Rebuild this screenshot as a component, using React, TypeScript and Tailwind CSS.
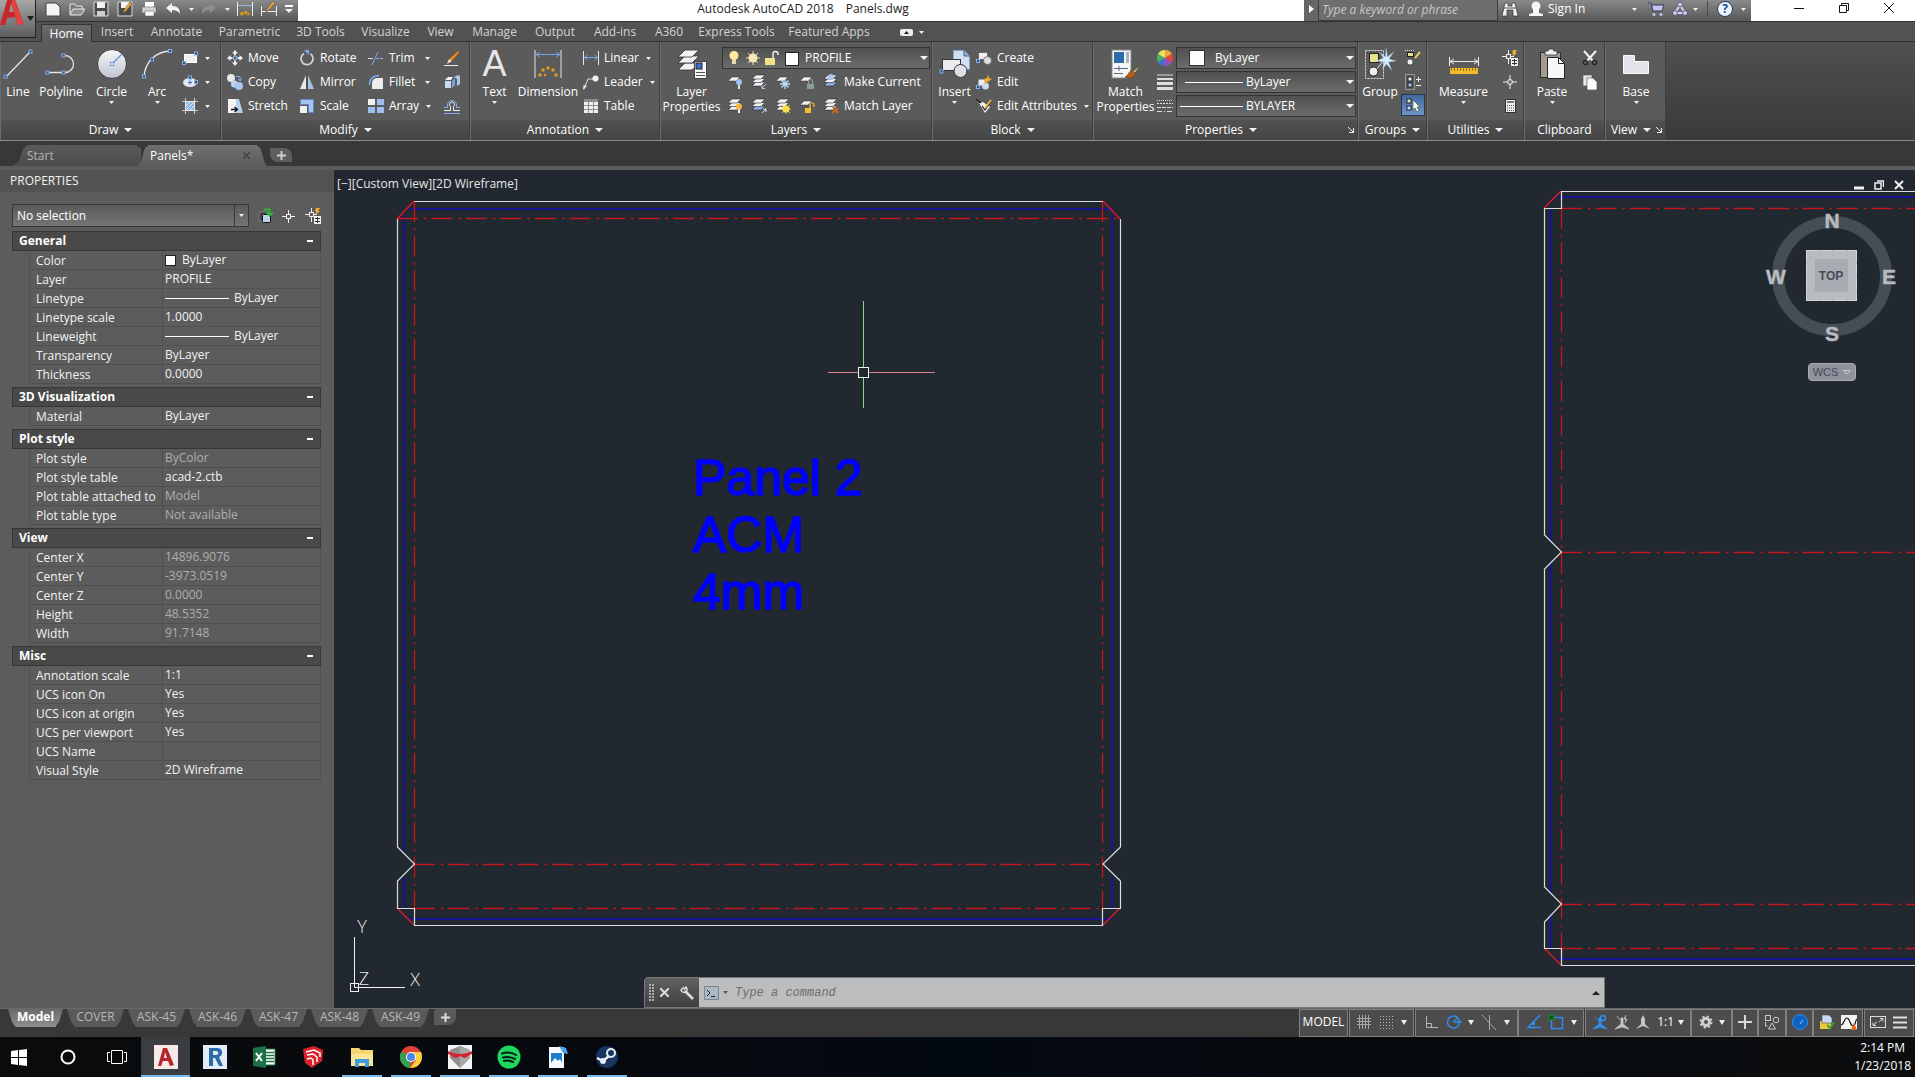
import type { ReactNode } from "react";

type Kids = { children?: ReactNode };

// small caret used by every drop-down
const Tri = ({ big = false, up = false, dark = false }: { big?: boolean; up?: boolean; dark?: boolean }) => (
  <svg width={big ? 8 : 5} height={big ? 4 : 3} viewBox="0 0 8 4" preserveAspectRatio="none" className="shrink-0" aria-hidden="true">
    <path d={up ? "M0 4h8L4 0z" : "M0 0h8L4 4z"} fill={dark ? "#222" : "#f2f2f2"} />
  </svg>
);

const Ic = ({ children, s = 16 }: Kids & { s?: number }) => (
  <svg width={s} height={s} viewBox={`0 0 ${s} ${s}`} fill="none" className="shrink-0" aria-hidden="true">
    {children}
  </svg>
);

const Grip = ({ x, y }: { x: number; y: number }) => (
  <rect x={x - 1.5} y={y - 1.5} width="3" height="3" fill="#3d4a5c" stroke="#7fb0f0" />
);

// ---------- large ribbon icons (32px) ----------
const big = {
  line: (
    <Ic s={32}>
      <path d="M4 29 28 4" stroke="#e4e4e4" strokeWidth="1.3" />
      <Grip x={3.5} y={28.5} />
      <Grip x={28.5} y={3.5} />
    </Ic>
  ),
  poly: (
    <Ic s={32}>
      <path d="M3 24.500h17a8.500 8.500 0 0 0 0-17h-1" stroke="#e4e4e4" strokeWidth="1.3" />
      <Grip x={2.5} y={24.5} />
      <Grip x={18.5} y={24.5} />
      <Grip x={18.5} y={7.5} />
    </Ic>
  ),
  circle: (
    <Ic s={32}>
      <defs>
        <linearGradient id="circ" x1="0" y1="0" x2="0" y2="1">
          <stop offset="0" stopColor="#f6f6f8" />
          <stop offset="1" stopColor="#bfc4cd" />
        </linearGradient>
      </defs>
      <circle cx="16" cy="16" r="14.500" fill="url(#circ)" stroke="#3c3c3c" />
      <path d="M16 16 26 6" stroke="#5f95dd" strokeWidth="1.300" />
      <rect x="14.500" y="14.500" width="3" height="3" fill="#fff" stroke="#5f95dd" />
    </Ic>
  ),
  arc: (
    <Ic s={32}>
      <path d="M3 29C4 14 14 4 29 3" stroke="#e4e4e4" strokeWidth="1.400" />
      <Grip x={3} y={28.5} />
      <Grip x={11} y={11.5} />
      <Grip x={29} y={3} />
    </Ic>
  ),
  text: <span className="h-8 font-['Liberation_Sans'] text-[36px] leading-8 text-[#e6e6e6]">A</span>,
  dim: (
    <Ic s={32}>
      <path d="M3 2v28M29 2v28" stroke="#e4e4e4" />
      <path d="M4 6.500h24M8 4 4 6.500 8 9M24 4l4 2.500L24 9" stroke="#6fa4ea" />
      <g fill="#e39a1c">
        <circle cx="16" cy="20" r="1.800" />
        <circle cx="11" cy="22" r="1.800" />
        <circle cx="21" cy="22" r="1.800" />
        <circle cx="8" cy="27" r="1.800" />
        <circle cx="13" cy="27" r="1.300" />
        <circle cx="24" cy="27" r="1.800" />
      </g>
    </Ic>
  ),
  layers: (
    <Ic s={32}>
      <g fill="#f2f2f2" stroke="#333" strokeWidth=".8">
        <path d="M9 15h14l-7 7H2z" />
        <path d="M9 8h14l-7 7H2z" />
        <path d="M9 2h14l-7 7H2z" />
      </g>
      <rect x="18.500" y="13.500" width="12" height="17" fill="#f6f6f6" stroke="#444" />
      <rect x="20" y="15" width="6" height="6" fill="#3e6dbb" stroke="#223" />
      <path d="M20 24.500h9M20 27.500h9" stroke="#555" />
    </Ic>
  ),
  insert: (
    <Ic s={32}>
      <path d="M14 2h11l6 6v14H14z" fill="#cfdff2" stroke="#50627c" />
      <path d="M25 2v6h6" fill="#8fb3de" stroke="#50627c" />
      <rect x="3.500" y="11.500" width="18" height="11" fill="#ececf0" stroke="#333" />
      <circle cx="21.500" cy="23" r="6.500" fill="#dcdfe6" stroke="#333" />
      <Grip x={2.5} y={23.5} />
    </Ic>
  ),
  match: (
    <Ic s={32}>
      <rect x="2" y="2" width="19" height="28" fill="#f4f6f8" stroke="#888" />
      <rect x="4" y="4" width="10" height="11" fill="#2f6aa8" />
      <path d="M16 4h3v11h-3z" fill="#aab4c2" />
      <path d="M4 20.500h14M4 25.500h9M9 18v5" stroke="#5a6b80" />
      <path d="m30 18-8 6 2 2z" fill="#ead3a5" stroke="#553" strokeWidth=".6" />
      <path d="m22 22 4 4c-3 5-7 5-11 3 3-1 4-6 7-7z" fill="#a8601c" stroke="#5a2f0a" strokeWidth=".6" />
    </Ic>
  ),
  group: (
    <Ic s={32}>
      <rect x="1.500" y="2.500" width="18" height="28" stroke="#ddd" strokeDasharray="2 1" />
      <rect x="5.500" y="5.500" width="9" height="9" fill="#e9e18e" stroke="#222" />
      <path d="M12 22 20 12" stroke="#e8e8e8" />
      <circle cx="9.500" cy="23.500" r="4.500" fill="#eee" stroke="#222" />
      <path d="m22 0 1.500 9 6-5-4.500 7 7 2-7.500 1 3 8-5-6-4 5 2-7-8-1 7-3-4-6 6 5z" fill="#d6edff" stroke="#8fc4f0" strokeWidth=".4" />
    </Ic>
  ),
  measure: (
    <Ic s={32}>
      <path d="M1.500 9v9M30.500 9v9M2 13.500h28M6 11l-4 2.500L6 16M26 11l4 2.500-4 2.500" stroke="#eee" />
      <rect x="2" y="20" width="28" height="6" fill="#f2bb2e" />
      <path d="M3 21.500h26" stroke="#7a5a08" strokeWidth="2" strokeDasharray="1 2" />
    </Ic>
  ),
  paste: (
    <Ic s={32}>
      <rect x="4.500" y="4.500" width="20" height="25" fill="#a59c90" stroke="#2e2e2e" />
      <path d="M9 3h3l1-2h4l1 2h3v4H9z" fill="#f0f0f0" stroke="#333" strokeWidth=".8" />
      <path d="M11.500 9.500h11l6 6v15h-17z" fill="#f7f7f7" stroke="#222" />
      <path d="M22.500 9.500v6h6" stroke="#222" />
    </Ic>
  ),
  base: (
    <Ic s={32}>
      <path d="M3.500 7.500h11v6h14v12h-25z" fill="#e2e4e9" stroke="#f8f8f8" />
    </Ic>
  ),
};

// ---------- small ribbon icons (16px) ----------
const Stack = ({ blue = false, children }: Kids & { blue?: boolean }) => (
  <Ic>
    <g fill="#f2f2f2" stroke="#2d2d2d" strokeWidth=".6">
      <path d="M5 8h9l-4 4H1z" fill={blue ? "#8ab0ea" : "#f2f2f2"} />
      <path d="M5 4.500h9l-4 4H1z" />
      <path d="M5 1h9l-4 4H1z" />
    </g>
    {children}
  </Ic>
);
const Sheet = ({ children }: Kids) => (
  <Ic>
    <path d="M5 3h8l-4 4H1z" fill="#f2f2f2" stroke="#2d2d2d" strokeWidth=".5" />
    {children}
  </Ic>
);

const sm = {
  rect: (
    <Ic>
      <rect x="2.500" y="4.500" width="12" height="8" fill="#eceef2" stroke="#fff" />
      <Grip x={2} y={13} />
      <Grip x={14} y={3.5} />
    </Ic>
  ),
  ellipse: (
    <Ic>
      <ellipse cx="8" cy="8.500" rx="7" ry="4.500" fill="#e3e6ec" />
      <path d="M8 6.500v4M6 8.500h4" stroke="#3c6fb4" />
      <Grip x={8} y={3.5} />
      <Grip x={14} y={8} />
    </Ic>
  ),
  hatch: (
    <Ic>
      <rect x="3.500" y="3.500" width="9" height="9" fill="#8db6ea" stroke="#e8e8e8" />
      <path d="M4 8l4-4M4 12l8-8M8 12l4-4" stroke="#e8f1ff" strokeWidth=".8" />
      <path d="M0 3.500h16M0 12.500h16M3.500 0v16M12.500 0v16" stroke="#e8e8e8" strokeWidth=".8" />
    </Ic>
  ),
  move: (
    <Ic>
      <path d="m8 0 3 3.500H9v2H7v-2H5zM8 16l3-3.500H9v-2H7v2H5zM0 8l3.500-3v2h2v2h-2v2zM16 8l-3.500-3v2h-2v2h2v2z" fill="#eee" />
      <rect x="6.500" y="6.500" width="3" height="3" stroke="#76a9ee" />
    </Ic>
  ),
  copy: (
    <Ic>
      <circle cx="4" cy="4" r="4" fill="#e9e9ec" />
      <circle cx="7.500" cy="10" r="3.500" fill="#c3d5ee" />
      <circle cx="12" cy="12" r="4" fill="#a6c8f2" />
      <path d="M9 2.500h4v4M11.500 5l1.500 2 2-2" stroke="#7db1f4" />
    </Ic>
  ),
  stretch: (
    <Ic>
      <path d="M1 1h8v14H1z" fill="#f4f4f4" />
      <path d="M9 1h3l4 14H9z" fill="#b5d0ee" />
      <path d="M4 11.500h6M7.500 9l3 2.500-3 2.500" stroke="#111" strokeWidth="1.300" />
    </Ic>
  ),
  rotate: (
    <Ic>
      <path d="M5 3.500a6 6 0 1 0 6.500.3" stroke="#cfd1d6" strokeWidth="1.800" />
      <path d="M5 0h5v5z" fill="#7aaef2" />
    </Ic>
  ),
  mirror: (
    <Ic>
      <path d="M7 1v14H1z" fill="#e9e9ec" />
      <path d="M9 1v14h6z" fill="#a4c1e8" />
      <path d="M8 0v16" stroke="#444" />
    </Ic>
  ),
  scale: (
    <Ic>
      <path d="M1.500 1.500h13v13h-5v-8h-8z" fill="#a5c4ee" stroke="#5c88c8" />
      <rect x="1" y="8" width="7" height="7" fill="#f0f0f0" />
    </Ic>
  ),
  trim: (
    <Ic>
      <path d="M0 8.500h5" stroke="#ddd" />
      <path d="M8 8.500h8" stroke="#7caef0" strokeDasharray="3 1" />
      <path d="M4 15 10 2" stroke="#7caef0" />
    </Ic>
  ),
  fillet: (
    <Ic>
      <path d="M4 15V9a5 5 0 0 1 5-5h6v11z" fill="#ededf0" />
      <path d="M1.500 11C1.500 5 5 1.500 11 1.500" stroke="#7caef0" strokeWidth="1.400" />
    </Ic>
  ),
  array: (
    <Ic>
      <rect x="0" y="1" width="7" height="6" fill="#f2f2f2" />
      <rect x="9" y="1" width="7" height="6" fill="#9cbff0" />
      <rect x="0" y="9" width="7" height="6" fill="#9cbff0" />
      <rect x="9" y="9" width="7" height="6" fill="#9cbff0" />
    </Ic>
  ),
  erase: (
    <Ic>
      <path d="M0 15.500h14" stroke="#eee" />
      <path d="M15 0v3l-7 8-3-2z" fill="#e8912c" stroke="#6a3a08" strokeWidth=".5" />
      <path d="m8 11-3-2-2 5z" fill="#f6e7cc" />
    </Ic>
  ),
  explode: (
    <Ic>
      <path d="M1 7h6v7H1z" fill="#c6dcf5" />
      <path d="M1 6l3-3h5L7 6z" fill="#eef5fd" />
      <path d="M8 7l3-3v7l-3 3z" fill="#7fa6d6" />
      <path d="m10 3 4-2 2 1v8l-3 2V5z" fill="#a9c9ec" />
    </Ic>
  ),
  offset: (
    <Ic>
      <path d="M0 12.500h6.500V8.500a2.500 2.500 0 1 1 3 0v4H16" stroke="#f0f0f0" />
      <path d="M0 15.500h16M0 9.500h3.500V7a4.500 4.500 0 1 1 9 0v2.500H16" stroke="#7caef0" />
    </Ic>
  ),
  linear: (
    <Ic>
      <path d="M.5 1v14M15.500 1v14" stroke="#e8e8e8" />
      <path d="M1 7.500h14M4.500 5 1.500 7.500l3 2.500M11.500 5l3 2.500-3 2.500" stroke="#74a9f0" />
    </Ic>
  ),
  leader: (
    <Ic>
      <path d="M1 15 5 5h5" stroke="#e0e0e0" />
      <path d="m0 16 .5-5L4 12z" fill="#e0e0e0" />
      <circle cx="12.500" cy="4.500" r="3" fill="#f4f4f4" />
    </Ic>
  ),
  table: (
    <Ic>
      <rect x="1" y="1" width="14" height="14" fill="#f0f0f0" />
      <rect x="1" y="1" width="14" height="3" fill="#8b8b8b" />
      <path d="M1 7.500h14M1 11.500h14M5.500 4v11M10.500 4v11" stroke="#8d8d8d" />
    </Ic>
  ),
  bOff: (
    <Sheet>
      <circle cx="12" cy="8" r="3" fill="#9cc5f4" />
      <path d="M12 11v4" stroke="#ddd" strokeWidth="2" />
    </Sheet>
  ),
  iso: (
    <Stack>
      <path d="m15 10-4 4m0-3v3.500h3" stroke="#a9cdf5" />
    </Stack>
  ),
  freeze: (
    <Sheet>
      <path d="M10 5v10M5 10h10M6.500 6.500l7 7M13.500 6.500l-7 7" stroke="#b9dcff" strokeWidth="1.300" />
    </Sheet>
  ),
  lock: (
    <Sheet>
      <rect x="8" y="10" width="7" height="5" fill="#87a093" />
      <path d="M9.500 10V7.500a2 2 0 0 1 4 0V10" stroke="#87a093" strokeWidth="1.200" />
    </Sheet>
  ),
  cur: (
    <Stack blue>
      <circle cx="8" cy="3" r="3" fill="#a9c6ee" />
    </Stack>
  ),
  bOn: (
    <Stack>
      <circle cx="12" cy="8.500" r="3" fill="#f8b53c" />
      <path d="M12 11v4" stroke="#eee" strokeWidth="2" />
    </Stack>
  ),
  uniso: (
    <Stack blue>
      <path d="m11 15 4-4m-3 0h3v3" stroke="#cfe3fa" />
    </Stack>
  ),
  thaw: (
    <Stack>
      <circle cx="11" cy="11" r="3.500" fill="#ffe04a" />
      <path d="M11 5v11M6 11h10M7 7l8 8M15 7l-8 8" stroke="#ffe04a" strokeWidth=".8" />
    </Stack>
  ),
  unlock: (
    <Sheet>
      <rect x="6" y="10" width="6" height="5" fill="#f2c230" />
      <path d="M11 10V7a2 2 0 0 1 4 0v2" stroke="#f2c230" strokeWidth="1.200" />
    </Sheet>
  ),
  mlayer: (
    <Stack>
      <path d="m10 9 5 6m0-5-6 5" stroke="#c96a1c" strokeWidth="2" />
    </Stack>
  ),
  create: (
    <Ic>
      <rect x="2.500" y="2.500" width="9" height="7" fill="#eeeef2" stroke="#444" strokeWidth=".6" />
      <circle cx="11.500" cy="10.500" r="4" fill="#dcdfe6" stroke="#444" strokeWidth=".6" />
      <Grip x={2} y={11} />
    </Ic>
  ),
  edit: (
    <Ic>
      <rect x="2.500" y="5.500" width="8" height="6" fill="#eeeef2" />
      <circle cx="9.500" cy="12" r="3.500" fill="#cfd8e8" />
      <path d="m8 5 3-1 1-4 1 4 3 1-3 2-4 3z" fill="#f2a533" />
      <Grip x={2} y={13} />
    </Ic>
  ),
  attr: (
    <Ic>
      <path d="m3 5 4-1 7 5-5 6z" fill="#f1f1f1" />
      <path d="m0 1 5 4M6 8l3 4 6-9" stroke="#1b1b1b" strokeWidth="1.200" />
      <path d="m15 2-6 8" stroke="#f2b33a" strokeWidth="2" />
    </Ic>
  ),
  wheel: (
    <Ic>
      <path d="M8 8V0a8 8 0 0 1 7 4z" fill="#f0a53a" />
      <path d="M8 8l7-4a8 8 0 0 1 0 8z" fill="#e2443a" />
      <path d="M8 8l7 4a8 8 0 0 1-7 4z" fill="#a84bb0" />
      <path d="M8 8v8a8 8 0 0 1-7-4z" fill="#3f73d0" />
      <path d="M8 8l-7 4a8 8 0 0 1 0-8z" fill="#49b06a" />
      <path d="M8 8 1 4a8 8 0 0 1 7-4z" fill="#e8e35a" />
    </Ic>
  ),
  weight: (
    <Ic>
      <path d="M0 1h16" stroke="#ddd" />
      <path d="M0 5h16" stroke="#ddd" strokeWidth="2" />
      <path d="M0 9.500h16" stroke="#ddd" strokeWidth="3" />
      <path d="M0 14.500h16" stroke="#ddd" strokeWidth="3" />
    </Ic>
  ),
  ltype: (
    <Ic>
      <path d="M0 2.500h16" stroke="#ddd" strokeDasharray="1 1" />
      <path d="M0 5.500h16" stroke="#ddd" strokeDasharray="2 1" />
      <path d="M0 9.500h16" stroke="#ddd" strokeDasharray="4 1" />
      <path d="M0 13.500h16" stroke="#ddd" strokeDasharray="5 2 1 2" />
    </Ic>
  ),
  ungroup: (
    <Ic>
      <rect x="2.500" y="2.500" width="6" height="4" fill="#e9e18e" stroke="#222" />
      <circle cx="5" cy="12" r="3" fill="#f0f0f0" stroke="#222" strokeWidth=".6" />
      <path d="M0 .5h10" stroke="#ddd" strokeDasharray="1 1" />
      <path d="m15 2-5 6" stroke="#e8c25a" strokeWidth="2" />
    </Ic>
  ),
  gedit: (
    <Ic>
      <rect x=".5" y=".5" width="9" height="15" stroke="#ccc" strokeDasharray="1 1" />
      <rect x="3" y="3" width="4" height="4" fill="#e8eef6" stroke="#222" />
      <rect x="3" y="9" width="4" height="4" fill="#9fc6f4" stroke="#222" />
      <path d="M11 5.500h5M13.500 3v5M11 11.500h5" stroke="#eee" />
    </Ic>
  ),
  gsel: (
    <Ic>
      <rect x="2" y="2" width="4" height="4" fill="#d8f0c0" stroke="#223" />
      <rect x="2" y="9" width="4" height="4" fill="#bfe0ff" stroke="#223" />
      <path d="m8 3 7 7h-3l2 4-2 1-2-4-2 2z" fill="#f2ffe6" stroke="#333" strokeWidth=".5" />
    </Ic>
  ),
  qsel: (
    <Ic>
      <path d="M6.500 0v14M0 6.500h12" stroke="#f0f0f0" />
      <rect x="4.500" y="4.500" width="4" height="4" fill="#5a5a5a" stroke="#f0f0f0" />
      <path d="m11 0h4l-2 3h2l-5 4 1.500-3.500H10z" fill="#f6b02c" />
      <rect x="9" y="8" width="7" height="8" fill="#f0f0f0" />
      <path d="M10 10.500h5M10 13.500h5M12.500 9v6" stroke="#333" />
    </Ic>
  ),
  point: (
    <Ic>
      <path d="M8 1v14M1 8h14" stroke="#f0f0f0" />
      <circle cx="8" cy="8" r="2.500" fill="#777" stroke="#f0f0f0" />
    </Ic>
  ),
  calc: (
    <Ic>
      <rect x="3.500" y="1.500" width="10" height="13" fill="#ededed" stroke="#333" />
      <path d="M5 4h7" stroke="#777" strokeWidth="2" />
      <path d="M5 7.500h7M5 10h7M5 12.500h7" stroke="#555" strokeDasharray="1 1" />
    </Ic>
  ),
  cut: (
    <Ic>
      <path d="M2 1 11 11M14 1 5 11" stroke="#f4f4f4" strokeWidth="2" />
      <circle cx="3.500" cy="12.500" r="2.200" stroke="#222" strokeWidth="1.200" />
      <circle cx="12.500" cy="12.500" r="2.200" stroke="#222" strokeWidth="1.200" />
    </Ic>
  ),
  clip: (
    <Ic>
      <path d="M1 1h9v11H1z" fill="#e6e6e6" stroke="#555" strokeWidth=".6" />
      <path d="M5 4h6l4 4v8H5z" fill="#fafafa" stroke="#444" strokeWidth=".6" />
    </Ic>
  ),
  pick: (
    <Ic>
      <path d="M8.500 2v13M2 8.500h13" stroke="#f4f4f4" />
      <rect x="6.500" y="6.500" width="4" height="4" fill="#5c5c5c" stroke="#f4f4f4" />
    </Ic>
  ),
  pickadd: (
    <Ic>
      <path d="M1 4h8v9H1z" fill="#444" stroke="#999" strokeWidth=".6" />
      <rect x="4.500" y="6.500" width="8" height="8" rx="1" fill="#b6d6ec" stroke="#111" />
      <path d="M6 1.500h5.500V6M8.500 4.500l3 3L15 4.500" stroke="#2fb52f" strokeWidth="1.800" />
    </Ic>
  ),
};

// ---------- ribbon building blocks ----------
function Panel({ title, width, arrow = true, launcher = false, children }: Kids & { title: string; width: string; arrow?: boolean; launcher?: boolean }) {
  return (
    <section className={`${width} flex shrink-0 flex-col border-r border-l border-r-[#3f3f3f] border-l-[#6c6c6c] bg-[#5b5b5b]`}>
      <div className="flex h-[78px] pt-1">{children}</div>
      <div className="flex h-5 items-center bg-linear-to-b from-[#525252] to-[#444]">
        <button className="flex flex-1 items-center justify-center gap-[6px] whitespace-nowrap text-white">
          {title}
          {arrow && <Tri big />}
        </button>
        {launcher && (
          <button aria-label={`${title} settings`} className="w-[9px]">
            <svg width="6" height="6" viewBox="0 0 6 6" fill="none" aria-hidden="true">
              <path d="m0 0 5 5M5.500 1v4.500H1" stroke="#eee" />
            </svg>
          </button>
        )}
      </div>
    </section>
  );
}

function Big({ icon, label, width, arrow = false }: { icon: ReactNode; label: string; width: string; arrow?: boolean }) {
  return (
    <button className={`${width} flex shrink-0 flex-col items-center pt-[2px] leading-[15px] text-white`}>
      {icon}
      <span className="mt-1 whitespace-pre-line text-center">{label}</span>
      {arrow && <span className="mt-[2px] flex"><Tri /></span>}
    </button>
  );
}

const Col = ({ children, cls = "" }: Kids & { cls?: string }) => <div className={`flex shrink-0 flex-col ${cls}`}>{children}</div>;

function Small({ icon, label, name, arrow = false, width = "" }: { icon: ReactNode; label?: string; name?: string; arrow?: boolean; width?: string }) {
  return (
    <button aria-label={label ?? name} className={`flex h-6 items-center whitespace-nowrap text-white ${width}`}>
      {icon}
      {label && <span className="ml-[5px] mr-auto">{label}</span>}
      {arrow && <span className="ml-[7px]"><Tri /></span>}
    </button>
  );
}

function Combo({ label, value, children, cls = "" }: Kids & { label: string; value: string; cls?: string }) {
  return (
    <label className={`flex h-[22px] items-center border border-[#333] bg-linear-to-b from-[#505050] to-[#6c6c6c] pr-px pl-[6px] ${cls}`}>
      {children}
      <select aria-label={label} className="min-w-0 flex-1 appearance-none bg-transparent text-white">
        <option>{value}</option>
      </select>
      <Tri big />
    </label>
  );
}

function Ribbon() {
  return (
    <div className="flex h-[99px] overflow-hidden border-b border-[#8a8a8a] bg-linear-to-b from-[#505050] to-[#3a3a3a] text-[12px]">
      <Panel title="Draw" width="w-[221px]">
        <Big icon={big.line} label="Line" width="w-[34px]" />
        <Big icon={big.poly} label="Polyline" width="w-[52px]" />
        <Big icon={big.circle} label="Circle" width="w-[49px]" arrow />
        <Big icon={big.arc} label="Arc" width="w-[42px]" arrow />
        <Col cls="ml-1">
          <Small icon={sm.rect} name="Rectangle" arrow />
          <Small icon={sm.ellipse} name="Ellipse" arrow />
          <Small icon={sm.hatch} name="Hatch" arrow />
        </Col>
      </Panel>
      <Panel title="Modify" width="w-[249px]">
        <Col cls="ml-[5px] w-[72px]">
          <Small icon={sm.move} label="Move" />
          <Small icon={sm.copy} label="Copy" />
          <Small icon={sm.stretch} label="Stretch" />
        </Col>
        <Col cls="w-[69px]">
          <Small icon={sm.rotate} label="Rotate" />
          <Small icon={sm.mirror} label="Mirror" />
          <Small icon={sm.scale} label="Scale" />
        </Col>
        <Col cls="w-[76px] pr-[14px]">
          <Small icon={sm.trim} label="Trim" arrow />
          <Small icon={sm.fillet} label="Fillet" arrow />
          <Small icon={sm.array} label="Array" arrow />
        </Col>
        <Col>
          <Small icon={sm.erase} name="Erase" />
          <Small icon={sm.explode} name="Explode" />
          <Small icon={sm.offset} name="Offset" />
        </Col>
      </Panel>
      <Panel title="Annotation" width="w-[190px]">
        <Big icon={big.text} label="Text" width="w-[47px]" arrow />
        <Big icon={big.dim} label="Dimension" width="w-[60px]" />
        <Col cls="ml-[5px] w-[70px]">
          <Small icon={sm.linear} label="Linear" arrow width="w-[67px]" />
          <Small icon={sm.leader} label="Leader" arrow />
          <Small icon={sm.table} label="Table" />
        </Col>
      </Panel>
      <Panel title="Layers" width="w-[272px]">
        <Big icon={big.layers} label={"Layer\nProperties"} width="w-[61px]" />
        <Col>
          <Combo label="Layer" value="PROFILE" cls="mt-px mb-px w-[208px]">
            <svg width="76" height="16" viewBox="0 0 76 16" fill="none" className="shrink-0" aria-hidden="true">
              <circle cx="5" cy="5.500" r="4.500" fill="#ffe9a0" />
              <path d="M3 9h4v5H3z" fill="#e6d8b0" />
              <g stroke="#e8dcb0">
                <path d="M24 1v14M17 8h14M19 3l10 10M29 3l-10 10" />
              </g>
              <circle cx="24" cy="8" r="4.500" fill="#f7e9b4" />
              <rect x="36" y="8" width="10" height="7" fill="#f5e08a" />
              <path d="M44 8V4a2.500 2.500 0 0 1 5 0v1" stroke="#f0f0f0" strokeWidth="1.500" />
              <rect x="56.500" y="2.500" width="13" height="13" fill="#fff" stroke="#222" />
            </svg>
          </Combo>
          <div className="ml-[5px] flex gap-2">
            <Small icon={sm.bOff} name="Off" />
            <Small icon={sm.iso} name="Isolate" />
            <Small icon={sm.freeze} name="Freeze" />
            <Small icon={sm.lock} name="Lock" />
            <Small icon={sm.cur} label="Make Current" />
          </div>
          <div className="ml-[5px] flex gap-2">
            <Small icon={sm.bOn} name="Turn all on" />
            <Small icon={sm.uniso} name="Unisolate" />
            <Small icon={sm.thaw} name="Thaw all" />
            <Small icon={sm.unlock} name="Unlock" />
            <Small icon={sm.mlayer} label="Match Layer" />
          </div>
        </Col>
      </Panel>
      <Panel title="Block" width="w-[161px]">
        <Big icon={big.insert} label="Insert" width="w-[43px]" arrow />
        <Col cls="w-[112px]">
          <Small icon={sm.create} label="Create" />
          <Small icon={sm.edit} label="Edit" />
          <Small icon={sm.attr} label="Edit Attributes" arrow />
        </Col>
      </Panel>
      <Panel title="Properties" width="w-[265px]" launcher>
        <Big icon={big.match} label={"Match\nProperties"} width="w-[63px]" />
        <Col cls="w-[19px]">
          <Small icon={sm.wheel} name="Color" />
          <Small icon={sm.weight} name="Lineweight" />
          <Small icon={sm.ltype} name="Linetype" />
        </Col>
        <Col cls="h-[71px] w-[180px] justify-between pt-[1px]">
          <Combo label="Object color" value="ByLayer">
            <span className="mr-[10px] ml-[6px] size-4 border border-[#333] bg-white" />
          </Combo>
          <Combo label="Lineweight" value="ByLayer">
            <span className="mr-[3px] ml-[2px] h-px w-[58px] bg-white" />
          </Combo>
          <Combo label="Linetype" value="BYLAYER">
            <span className="mr-[3px] -ml-[3px] h-px w-[63px] bg-white" />
          </Combo>
        </Col>
      </Panel>
      <Panel title="Groups" width="w-[69px]">
        <Big icon={big.group} label="Group" width="w-[42px]" />
        <Col>
          <span className="flex justify-center"><Small icon={sm.ungroup} name="Ungroup" /></span>
          <span className="flex justify-center"><Small icon={sm.gedit} name="Group edit" /></span>
          <button aria-label="Group selection" className="flex h-[22px] w-6 items-center justify-center border border-[#26374f] bg-linear-to-b from-[#41689f] to-[#6f94c8]">
            {sm.gsel}
          </button>
        </Col>
      </Panel>
      <Panel title="Utilities" width="w-[97px]">
        <Big icon={big.measure} label="Measure" width="w-[71px]" arrow />
        <Col cls="ml-[3px]">
          <Small icon={sm.qsel} name="Quick select" />
          <Small icon={sm.point} name="ID point" />
          <Small icon={sm.calc} name="Calculator" />
        </Col>
      </Panel>
      <Panel title="Clipboard" width="w-[81px]" arrow={false}>
        <Big icon={big.paste} label="Paste" width="w-[54px]" arrow />
        <Col cls="ml-[3px]">
          <Small icon={sm.cut} name="Cut" />
          <Small icon={sm.clip} name="Copy clip" />
        </Col>
      </Panel>
      <Panel title="View" width="w-[61px]" launcher>
        <Big icon={big.base} label="Base" width="w-[60px]" arrow />
      </Panel>
    </div>
  );
}

// ---------- title bar ----------
const qat = [
  { name: "New", el: <path d="M1 2h10l4 4v9H1z" fill="#f4f4f4" stroke="#444" /> },
  { name: "Open", el: <><path d="M1 14V3h5l1 2h6v3" fill="#777" stroke="#e8e8e8" /><path d="m1 14 3-6h12l-4 6z" fill="#8c8c8c" stroke="#e8e8e8" /></> },
  { name: "Save", el: <><path d="M1 1h14v14H1z" fill="#4a4a4a" stroke="#ddd" /><path d="M4 1h8v6H4z" fill="#f2f2f2" /><path d="M4 10h8v5H4z" fill="#cfcfcf" /></> },
  { name: "Save As", el: <><path d="M1 1h14v14H1z" fill="#4a4a4a" stroke="#ddd" /><path d="M4 1h8v6H4z" fill="#f2f2f2" /><path d="m15 3-7 8-2 1 1-3 6-8z" fill="#f0ab3a" stroke="#444" strokeWidth=".5" /></> },
  { name: "Plot", el: <><path d="M4 1h9v5H4z" fill="#fff" /><path d="M1 6h14v6H1z" fill="#d4d4d4" stroke="#555" strokeWidth=".5" /><path d="M4 10h9v5H4z" fill="#f8f8f8" stroke="#555" strokeWidth=".5" /></> },
  { name: "Undo", el: <path d="M1 7 7 2v3c6 0 8 3 8 8-2-3-4-4-8-4v3z" fill="#f4f4f4" /> },
  { name: "Redo", el: <path d="M15 7 9 2v3C3 5 1 8 1 13c2-3 4-4 8-4v3z" fill="#8e8e8e" /> },
  { name: "Dimension style", el: <><path d="M.5 1v14M15.500 1v14" stroke="#eee" /><path d="M1 4.500h14" stroke="#8fb4e4" /><path d="M4 14a4.500 4.500 0 0 1 8 0" stroke="#e39a1c" strokeWidth="3" strokeDasharray="3 1" /></> },
  { name: "Dimension", el: <><path d="M.5 5v10M15.500 5v10M1 10.500h14" stroke="#eee" /><path d="m14 2-7 8-2 1 1-3 6-8z" fill="#f0ab3a" stroke="#444" strokeWidth=".5" /></> },
];

function TitleBar() {
  return (
    <header className="flex h-[21px] shrink-0 bg-white text-[12px]">
      <div className="flex w-[298px] shrink-0 items-center bg-linear-to-b from-[#8a8a8a] to-[#575757] pb-[3px] pl-[41px]">
        {qat.map((q, i) => (
          <span key={q.name} className="flex items-center">
            <button aria-label={q.name} className="flex w-6 justify-center">
              <Ic>{q.el}</Ic>
            </button>
            {(i === 5 || i === 6) && <span className="flex w-3 justify-center"><Tri /></span>}
          </span>
        ))}
        <button aria-label="Customize toolbar" className="ml-1 flex flex-col items-center gap-[2px]">
          <span className="h-[2px] w-2 bg-white" />
          <Tri big />
        </button>
      </div>
      <div className="flex flex-1 items-center justify-center gap-3 pb-[3px] pl-1 whitespace-nowrap text-[#1d1d1d]">
        <span>Autodesk AutoCAD 2018</span>
        <span>Panels.dwg</span>
      </div>
      <div className="flex w-[447px] shrink-0 items-center bg-linear-to-b from-[#8a8a8a] to-[#575757]">
        <button aria-label="Collapse search" className="flex h-full w-[14px] items-center justify-center bg-[#666] pb-[3px]">
          <svg width="5" height="8" viewBox="0 0 5 8" aria-hidden="true"><path d="M0 0v8l5-4z" fill="#fff" /></svg>
        </button>
        <input aria-label="Search" placeholder="Type a keyword or phrase" className="h-full w-[180px] border-x border-b border-[#3d3d3d] bg-[#6e6e6e] pb-[2px] pl-[3px] italic text-white placeholder:text-[#c8c8c8]" />
        <div className="flex items-center pb-[3px] text-white">
          <button aria-label="Search help" className="ml-1">
            <Ic>
              <path d="M3 2h3v3h4V2h3l3 13h-5V9H5v6H0z" fill="#f0f0f0" stroke="#333" strokeWidth=".7" />
              <path d="M2 7h12" stroke="#555" />
            </Ic>
          </button>
          <button className="ml-[10px] flex w-[99px] items-center gap-1">
            <Ic>
              <circle cx="8" cy="5" r="4.500" fill="#f6f6f6" />
              <path d="M5 9h6v3l4 1v2H1v-2l4-1z" fill="#f6f6f6" />
            </Ic>
            <span>Sign In</span>
          </button>
          <span className="ml-[5px]"><Tri /></span>
          <button aria-label="App store" className="ml-[11px]">
            <Ic>
              <path d="M0 2h3l2 8h9l2-6H4" fill="#c4c4ee" stroke="#33365a" />
              <circle cx="6" cy="13.500" r="1.500" fill="#c4c4ee" />
              <circle cx="13" cy="13.500" r="1.500" fill="#c4c4ee" />
            </Ic>
          </button>
          <button aria-label="Stay connected" className="mr-[5px] ml-2">
            <Ic>
              <path d="m8 4 5 8H3z" stroke="#d4d4f4" strokeWidth="2" />
              <circle cx="8" cy="3.500" r="2.500" fill="#c4c4ee" stroke="#33365a" strokeWidth=".6" />
              <circle cx="3" cy="12" r="2.500" fill="#c4c4ee" stroke="#33365a" strokeWidth=".6" />
              <circle cx="13" cy="12" r="2.500" fill="#c4c4ee" stroke="#33365a" strokeWidth=".6" />
            </Ic>
          </button>
          <Tri />
          <span className="mx-[9px] h-4 w-px bg-[#4a4a4a]" />
          <button aria-label="Help" className="mr-2 flex size-4 items-center justify-center rounded-full border border-[#223a66] bg-[#eef3fb] text-[12px] leading-[14px] font-bold text-[#234a94]">?</button>
          <Tri />
        </div>
      </div>
      <div className="flex w-[164px] shrink-0 items-center gap-[35px] pb-[5px] pl-[43px]">
        <button aria-label="Minimize"><svg width="10" height="10" aria-hidden="true"><path d="M0 5.500h10" stroke="#111" /></svg></button>
        <button aria-label="Restore"><svg width="10" height="10" fill="none" aria-hidden="true"><path d="M.5 2.500h7v7h-7zM2.500 2V.500h7v7H8" stroke="#111" /></svg></button>
        <button aria-label="Close"><svg width="10" height="10" aria-hidden="true"><path d="m0 0 10 10M10 0 0 10" stroke="#111" /></svg></button>
      </div>
    </header>
  );
}

const TABS = [
  { label: "Insert", w: "w-[50px]" },
  { label: "Annotate", w: "w-[69px]" },
  { label: "Parametric", w: "w-[77px]" },
  { label: "3D Tools", w: "w-[65px]" },
  { label: "Visualize", w: "w-[65px]" },
  { label: "View", w: "w-[45px]" },
  { label: "Manage", w: "w-[63px]" },
  { label: "Output", w: "w-[58px]" },
  { label: "Add-ins", w: "w-[62px]" },
  { label: "A360", w: "w-[46px]" },
  { label: "Express Tools", w: "w-[89px]" },
  { label: "Featured Apps", w: "w-[96px]" },
];

function RibbonTabs() {
  return (
    <nav className="flex h-[21px] shrink-0 items-end border-y border-[#333] bg-[#525252] pl-[41px] text-[12px] text-[#d2d2d2]">
      <button className="-mb-px h-[18px] w-[51px] border border-b-0 border-[#333] bg-linear-to-b from-[#6a6a6a] to-[#5b5b5b] leading-[13px] text-white">Home</button>
      {TABS.map(t => (
        <button key={t.label} className={`${t.w} h-[18px] leading-4 whitespace-nowrap`}>{t.label}</button>
      ))}
      <button aria-label="Minimize ribbon" className="ml-[23px] flex h-[18px] items-center gap-[6px]">
        <span className="flex h-[7px] w-[13px] items-center justify-center rounded-[2px] bg-[#eee]"><Tri up dark /></span>
        <Tri />
      </button>
    </nav>
  );
}

function DocTabs() {
  return (
    <nav className="flex h-[29px] shrink-0 items-end border-b-4 border-[#5c5c5c] bg-[#383838] pl-3 text-[12px]">
      <button className="h-[21px] w-[129px] bg-linear-to-b from-[#5a5a5a] to-[#4c4c4c] pl-[15px] text-left text-[#b4b4b4] [clip-path:polygon(0_100%,5%_80%,9%_15%,12%_0,96%_0,100%_15%,100%_100%)]">Start</button>
      <div className="-ml-1 flex h-[21px] w-[130px] items-center bg-linear-to-b from-[#707070] to-[#5c5c5c] pr-[17px] pl-[13px] text-white [clip-path:polygon(0_100%,3%_80%,6%_15%,9%_0,92%_0,95%_15%,98%_80%,100%_100%)]">
        <button>Panels*</button>
        <button aria-label="Close tab" className="ml-auto">
          <svg width="7" height="7" aria-hidden="true"><path d="m0 0 7 7M7 0 0 7" stroke="#444" strokeWidth="1.500" /></svg>
        </button>
      </div>
      <button aria-label="New tab" className="mb-1 ml-[3px] flex h-[14px] w-[22px] items-center justify-center rounded-tr-lg rounded-bl-lg bg-[#5e5e5e]">
        <svg width="9" height="9" aria-hidden="true"><path d="M4.500 0v9M0 4.500h9" stroke="#ccc" strokeWidth="2" /></svg>
      </button>
    </nav>
  );
}

// ---------- properties palette ----------
type Row = { k: string; v: string; dim?: boolean; pre?: "swatch" | "line" };
const GROUPS: { title: string; rows: Row[] }[] = [
  {
    title: "General",
    rows: [
      { k: "Color", v: "ByLayer", pre: "swatch" },
      { k: "Layer", v: "PROFILE" },
      { k: "Linetype", v: "ByLayer", pre: "line" },
      { k: "Linetype scale", v: "1.0000" },
      { k: "Lineweight", v: "ByLayer", pre: "line" },
      { k: "Transparency", v: "ByLayer" },
      { k: "Thickness", v: "0.0000" },
    ],
  },
  { title: "3D Visualization", rows: [{ k: "Material", v: "ByLayer" }] },
  {
    title: "Plot style",
    rows: [
      { k: "Plot style", v: "ByColor", dim: true },
      { k: "Plot style table", v: "acad-2.ctb" },
      { k: "Plot table attached to", v: "Model", dim: true },
      { k: "Plot table type", v: "Not available", dim: true },
    ],
  },
  {
    title: "View",
    rows: [
      { k: "Center X", v: "14896.9076", dim: true },
      { k: "Center Y", v: "-3973.0519", dim: true },
      { k: "Center Z", v: "0.0000", dim: true },
      { k: "Height", v: "48.5352", dim: true },
      { k: "Width", v: "91.7148", dim: true },
    ],
  },
  {
    title: "Misc",
    rows: [
      { k: "Annotation scale", v: "1:1" },
      { k: "UCS icon On", v: "Yes" },
      { k: "UCS icon at origin", v: "Yes" },
      { k: "UCS per viewport", v: "Yes" },
      { k: "UCS Name", v: "" },
      { k: "Visual Style", v: "2D Wireframe" },
    ],
  },
];

function Properties() {
  return (
    <aside className="w-[334px] shrink-0 bg-[#5c5c5c] pr-[13px] text-[12px] text-[#f2f2f2]">
      <h2 className="-mr-[13px] h-[22px] bg-[#525252] pl-[10px] leading-[22px]">PROPERTIES</h2>
      <div className="mt-3 mb-1 flex h-[23px] items-center pl-3">
        <label className="flex h-full w-[237px] items-center border border-[#383838] bg-linear-to-b from-[#5a5a5a] to-[#757575] pl-1">
          <select aria-label="Selection" className="h-full flex-1 appearance-none bg-transparent text-white">
            <option>No selection</option>
          </select>
          <span className="flex h-full w-[14px] items-center justify-center border-l border-[#383838]"><Tri /></span>
        </label>
        <button aria-label="Toggle PICKADD" className="ml-[9px]">{sm.pickadd}</button>
        <button aria-label="Select objects" className="ml-[6px]">{sm.pick}</button>
        <button aria-label="Quick select" className="ml-auto">{sm.qsel}</button>
      </div>
      {GROUPS.map(g => (
        <section key={g.title} className="mb-[3px] pl-3">
          <button className="flex h-5 w-full items-center justify-between border border-[#363636] bg-[#494949] pr-[7px] pl-[6px] font-bold text-white">
            {g.title}
            <span className="h-[2px] w-[6px] bg-white" />
          </button>
          <table className="ml-[17px] w-[292px] table-fixed border-separate border-spacing-0 border-x border-[#525252]">
            <tbody>
              {g.rows.map(r => (
                <tr key={r.k}>
                  <th scope="row" className="h-[19px] w-[133px] border-r border-b border-[#505050] p-0 pt-[2px] pl-[6px] text-left leading-4 font-normal">{r.k}</th>
                  <td className={`h-[19px] border-b border-[#505050] p-0 pl-[2px] leading-[18px] ${r.dim ? "text-[#aeaeae]" : ""}`}>
                    <span className="flex items-center">
                      {r.pre === "swatch" && <span className="mr-[6px] size-[11px] border border-[#222] bg-white" />}
                      {r.pre === "line" && <span className="mr-[5px] h-px w-[64px] bg-white" />}
                      {r.v}
                    </span>
                  </td>
                </tr>
              ))}
            </tbody>
          </table>
        </section>
      ))}
    </aside>
  );
}

// ---------- drawing area ----------
function Drawing() {
  return (
    <svg className="absolute inset-0 h-full w-full" fill="none" role="img" aria-label="Panel drawing">
      {/* inner sheet lines */}
      <g stroke="#151592" strokeWidth="2">
        <path d="M75 39H779M70 44V681M70 707V738M778 44V681M778 707V738M75 749H779" />
        <path d="M1223 27H2400M1217 38V371M1217 393V723M1217 745V778M1223 789H2400" />
      </g>
      {/* fold lines */}
      <g stroke="#c4161c" strokeWidth="1.300" strokeDasharray="21 6 2.500 5">
        <path d="M63 48.500H786M80 694.500H769M80 738.500H769M80.500 31V755M768.500 31V755" />
        <path d="M1227 38.500H2400M1227 382.500H2400M1227 734.500H2400M1227 778.500H2400M1227.500 38V795" />
      </g>
      {/* corner cuts */}
      <path d="M63 49 80 31M769 31 786 49M63 738 80 755M786 738 769 755M1210 38 1227 21M1210 778 1227 795" stroke="#e01830" strokeWidth="1.300" />
      {/* profiles */}
      <g stroke="#dcdcdc" strokeWidth="1.200">
        <path d="M80.500 31.500H769M63.500 49V677L80.500 694 63.500 711V738.500H80.500V755.500H768.500V738.500H786.500V711L769 694 786.500 677V49" />
        <path d="M2400 21.500H1227.500V38.500H1210.500V365L1227.500 382 1210.500 399V717L1227.500 734 1210.500 752V778.500H1227.500V795.500H2400" />
      </g>
      <g fill="#0000ff" stroke="#0000ff" strokeWidth="1.500" className="font-['Liberation_Sans'] text-[50px]">
        <text x="359" y="325">Panel 2</text>
        <text x="359" y="382">ACM</text>
        <text x="359" y="439">4mm</text>
      </g>
      {/* cursor */}
      <path d="M494 202.500H601" stroke="#d8808c" />
      <path d="M529.500 131V238" stroke="#86d694" />
      <rect x="524.500" y="197.500" width="10" height="10" fill="#212830" stroke="#f2f2f2" />
      {/* UCS icon */}
      <path d="M20.500 767V817.500H71" stroke="#f2f2f2" />
      <rect x="16.500" y="813.500" width="8" height="8" stroke="#f2f2f2" />
      <g fill="#e8e8e8" textAnchor="middle" className="font-['Open_Sans'] text-[18px] font-light">
        <text x="28" y="763">Y</text>
        <text x="81" y="816">X</text>
        <text x="30" y="815">Z</text>
      </g>
    </svg>
  );
}

function ViewCube() {
  return (
    <div className="absolute top-[35px] right-[15px] flex w-[136px] flex-col items-center">
      <svg width="136" height="144" viewBox="0 -4 136 144" fill="none" role="img" aria-label="View cube">
        <circle cx="68" cy="67" r="54" stroke="#454d56" strokeWidth="12" />
        <rect x="42" y="41" width="51" height="51" fill="#b9bbc1" />
        <rect x="51" y="50" width="33" height="33" fill="#a9abb3" />
        <path d="M42 41.500h51M42 91.500h51M42.500 41v51M92.500 41v51" stroke="#d4d5d9" strokeDasharray="12 2" />
        <g textAnchor="middle" fill="#b7babe" stroke="#b7babe" strokeWidth=".5" className="font-['Liberation_Sans'] text-[21px] font-bold">
          <text x="68" y="19">N</text>
          <text x="68" y="132">S</text>
          <text x="12" y="75">W</text>
          <text x="125" y="75">E</text>
        </g>
        <text x="67" y="71" textAnchor="middle" fill="#474b52" className="font-['Liberation_Sans'] text-[12px] font-bold">TOP</text>
      </svg>
      <button className="mt-[14px] flex h-[18px] w-12 items-center justify-center gap-[5px] rounded-[4px] border border-[#a9acb6] bg-[#8e929d] font-['Liberation_Sans'] text-[11px] text-[#444a56]">
        WCS
        <svg width="8" height="5" fill="none" aria-hidden="true"><path d="M.5.500h7L4 4z" stroke="#c8cad0" /></svg>
      </button>
    </div>
  );
}

function CommandLine() {
  return (
    <div className="absolute inset-x-[310px] bottom-0 flex h-[31px] rounded-tl-sm border border-[#777] bg-[#bcbdbf]">
      <div className="flex w-[54px] items-center bg-linear-to-b from-[#616161] to-[#404040] pl-1">
        <svg width="5" height="18" aria-hidden="true"><path d="M1 0v18M4 0v18" stroke="#aaa" strokeWidth="2" strokeDasharray="2 1" /></svg>
        <button aria-label="Close command line" className="ml-[6px]">
          <svg width="9" height="9" aria-hidden="true"><path d="m0 0 9 9M9 0 0 9" stroke="#ddd" strokeWidth="2" /></svg>
        </button>
        <button aria-label="Customize" className="ml-[11px]">
          <svg width="14" height="14" fill="none" aria-hidden="true">
            <path d="m5 5 8 8" stroke="#ddd" strokeWidth="2.500" />
            <path d="M4 1 1 4a3.500 3.500 0 0 0 5 2 3.500 3.500 0 0 0 0-5L4 4" stroke="#ddd" strokeWidth="1.500" />
          </svg>
        </button>
      </div>
      <button aria-label="Recent commands" className="ml-[5px] flex items-center gap-1">
        <svg width="15" height="14" fill="none" aria-hidden="true">
          <rect x=".5" y=".5" width="14" height="13" fill="#a9b8c2" stroke="#7a8790" />
          <path d="m3 4 3 3-3 3M7 10.500h4" stroke="#222" />
        </svg>
        <svg width="5" height="3" aria-hidden="true"><path d="M0 0h5L2.500 3z" fill="#555" /></svg>
      </button>
      <input aria-label="Command" placeholder="Type a command" className="ml-[7px] min-w-0 flex-1 bg-transparent font-['Liberation_Mono'] text-[12px] italic text-[#333] placeholder:text-[#6e6e6e]" />
      <button aria-label="Command history" className="mr-1"><Tri big up dark /></button>
    </div>
  );
}

function Canvas() {
  return (
    <main className="relative flex-1 overflow-hidden bg-[#212830]">
      <Drawing />
      <p className="relative pt-[5px] pl-[3px] text-[12px] leading-[18px] text-[#e6e6e6]">[−][Custom View][2D Wireframe]</p>
      <div className="absolute top-[10px] right-[11px] flex gap-[10px]">
        <button aria-label="Minimize drawing"><svg width="10" height="10" aria-hidden="true"><path d="M0 8h10" stroke="#f0f0f0" strokeWidth="3" /></svg></button>
        <button aria-label="Restore drawing"><svg width="10" height="10" fill="none" aria-hidden="true"><path d="M1 3h6v6H1zM3 1h6.500v6" stroke="#f0f0f0" strokeWidth="1.500" /></svg></button>
        <button aria-label="Close drawing"><svg width="10" height="10" aria-hidden="true"><path d="m1 1 8 8M9 1 1 9" stroke="#f0f0f0" strokeWidth="2" /></svg></button>
      </div>
      <ViewCube />
      <CommandLine />
    </main>
  );
}

// ---------- status bar ----------
const LAYOUTS = ["COVER", "ASK-45", "ASK-46", "ASK-47", "ASK-48", "ASK-49"];

const Cell = ({ children, w }: Kids & { w: string }) => (
  <div className={`${w} flex h-[28px] shrink-0 items-center justify-evenly border border-[#808080] bg-[#4c4c4c] pb-[2px]`}>{children}</div>
);
const Tool = ({ name, children }: Kids & { name: string }) => (
  <button aria-label={name} className="flex"><Ic>{children}</Ic></button>
);
const Drop = () => (
  <svg width="6" height="5" className="shrink-0" aria-hidden="true"><path d="M0 0h6L3 5z" fill="#eee" /></svg>
);
const BLUE = "#2f8cf0";

function StatusBar() {
  return (
    <div className="flex h-[29px] shrink-0 justify-between border-t border-[#6a6a6a] bg-[#383838] text-[12px]">
      <nav className="flex pl-2 text-[#b8b8b8]">
        <button className="h-[18px] w-[55px] bg-linear-to-b from-[#6a6a6a] to-[#8e8e8e] pb-[2px] leading-[14px] font-bold text-white [clip-path:polygon(0_0,100%_0,93%_70%,86%_100%,14%_100%,7%_70%)]">Model</button>
        {LAYOUTS.map(l => (
          <button key={l} className="ml-1 h-[18px] w-[57px] bg-[#5a5a5a] pb-[2px] leading-[14px] [clip-path:polygon(0_0,100%_0,93%_70%,86%_100%,14%_100%,7%_70%)]">{l}</button>
        ))}
        <button aria-label="New layout" className="ml-[5px] flex h-4 w-[22px] items-center justify-center rounded-tl-sm rounded-br-lg bg-[#5a5a5a]">
          <svg width="9" height="9" aria-hidden="true"><path d="M4.500 0v9M0 4.500h9" stroke="#ddd" strokeWidth="2" /></svg>
        </button>
      </nav>
      <div className="flex pr-px text-white">
        <Cell w="w-[49px]"><button>MODEL</button></Cell>
        <span className="w-px" />
        <Cell w="w-[65px]">
          <Tool name="Grid"><path d="M3.500 1v14M6.500 1v14M9.500 1v14M12.500 1v14M1 4.500h14M1 7.500h14M1 10.500h14" stroke="#a8a8a8" /></Tool>
          <Tool name="Snap"><path d="M1 2.500h14M1 5.500h14M1 8.500h14M1 11.500h14M1 14.500h14" stroke="#b8b8b8" strokeDasharray="1 2" /></Tool>
          <Drop />
        </Cell>
        <span className="w-px" />
        <Cell w="w-[103px]">
          <Tool name="Ortho"><path d="M3.500 2v11.500H15M4 9.500h4.500v4" stroke="#b8b8b8" /></Tool>
          <Tool name="Polar tracking"><circle cx="7.500" cy="8" r="6" stroke={BLUE} strokeWidth="1.500" /><path d="M7.500 8H16M7.500 8l4-4" stroke={BLUE} strokeWidth="1.300" /></Tool>
          <Drop />
          <Tool name="Isodraft"><path d="m1 1 14 15M8.500 1v15" stroke="#aaa" /></Tool>
          <Drop />
        </Cell>
        <Cell w="w-[66px]">
          <Tool name="Object snap tracking"><path d="M14 1 2 13.500h13" stroke={BLUE} strokeWidth="1.600" /><rect x="6" y="8" width="3" height="3" fill={BLUE} /></Tool>
          <Tool name="Object snap"><rect x="3.500" y="3.500" width="11" height="11" stroke={BLUE} strokeWidth="1.500" /><rect x="1" y="1" width="5" height="5" fill="#0b5a1c" stroke="#1f8a35" /></Tool>
          <Drop />
        </Cell>
        <span className="w-px" />
        <Cell w="w-[106px]">
          <Tool name="Annotation visibility"><path d="m1 15 6-5V4h2v6l6 5-7-2zM3 3l4 4" fill={BLUE} stroke={BLUE} /><circle cx="11" cy="4" r="2.500" stroke={BLUE} strokeWidth="1.500" /></Tool>
          <Tool name="Auto scale"><path d="m1 15 6-5V4h2v6l6 5-7-2zM3 2l3 4M12 1l-2 4h3l-2 4" fill="#c4c4c4" stroke="#c4c4c4" strokeWidth=".8" /></Tool>
          <Tool name="Annotation scale"><path d="m1 15 5-5V5l2-4 2 4v5l5 5-7-3z" fill="#c4c4c4" /></Tool>
          <button className="flex items-center gap-1">1:1 <Drop /></button>
        </Cell>
        <Cell w="w-[41px]">
          <Tool name="Workspace"><circle cx="8" cy="8" r="3.500" stroke="#ccc" strokeWidth="3" /><circle cx="8" cy="8" r="5.500" stroke="#ccc" strokeWidth="2" strokeDasharray="2.200 2.100" /></Tool>
          <Drop />
        </Cell>
        <Cell w="w-[26px]"><Tool name="Annotation monitor"><path d="M8 1v14M1 8h14" stroke="#d8d8d8" strokeWidth="2" /></Tool></Cell>
        <Cell w="w-[28px]"><Tool name="Isolate objects"><rect x="1.500" y="1.500" width="5" height="5" stroke="#ccc" /><circle cx="12" cy="6" r="2.800" stroke="#ccc" /><path d="m8 9 3.500 6h-7z" stroke="#ccc" /><path d="M1.500 8v4h2" stroke="#ccc" /></Tool></Cell>
        <Cell w="w-[27px]"><Tool name="Hardware acceleration"><circle cx="8" cy="8" r="7.500" fill="#0f62bd" stroke="#2f8cf0" /><path d="m8 10 3-4" stroke="#9cc8f8" /></Tool></Cell>
        <Cell w="w-[50px]">
          <Tool name="Trusted file"><path d="M1 7h5l1 1h5v7H1z" fill="#f0c63a" /><path d="M3 1h7l3 3v5H3z" fill="#c4dcf4" stroke="#446" strokeWidth=".6" /><path d="m8 11 3 3 4-6" stroke="#32a832" strokeWidth="2" /></Tool>
          <Tool name="Graphics"><rect y="1" width="16" height="14" fill="#f4f4f4" /><path d="M0 11c3 0 3-7 6-7s3 8 6 8 2-6 4-7" stroke="#111" strokeWidth="1.200" /><path d="m13 9 3 7h-6z" fill="#e8641c" /></Tool>
        </Cell>
        <span className="w-px" />
        <Cell w="w-[50px]">
          <Tool name="Clean screen"><rect x=".5" y="2.500" width="15" height="11" stroke="#ddd" /><path d="M9 8l4-3.500M10 4.500h3v3M7 8l-4 3.500M3 8.500v3h3" stroke="#ddd" /></Tool>
          <Tool name="Customization"><path d="M1 3.500h14M1 8.500h14M1 13.500h14" stroke="#ddd" strokeWidth="2" /></Tool>
        </Cell>
      </div>
    </div>
  );
}

// ---------- windows taskbar ----------
const APPS: { name: string; run?: boolean; active?: boolean; el: ReactNode }[] = [
  { name: "Start", el: <path d="m4 6 7-1v7H4zM12 5l8-1v8h-8zM4 13h7v7l-7-1zM12 13h8v8l-8-1z" fill="#fff" /> },
  { name: "Cortana", el: <circle cx="12" cy="12" r="6.500" stroke="#fff" strokeWidth="2" /> },
  { name: "Task View", el: <path d="M6.500 5.500h11v13h-11zM5 7.500H2.500v9H5M19 7.500h2.500v9H19" stroke="#fff" /> },
  { name: "AutoCAD", active: true, run: true, el: <><path d="M0 0h24v24H0z" fill="#f6e9e8" /><path d="m4 21 5-18h4l7 17-4 1-2-5H9l-2 5zm6-8h3l-2-6z" fill="#b8252a" fillRule="evenodd" /></> },
  { name: "Revit", el: <><path d="M0 0h24v24H0z" fill="#e3ecf6" /><path d="M6 3h8c7 0 6 8 2 9l4 9h-4l-4-8h-2v8H6zm4 3v4h3c3 0 3-4 0-4z" fill="#2d6ba8" fillRule="evenodd" /></> },
  { name: "Excel", el: <><path d="M12 4h11v16H12z" fill="#fff" stroke="#1d7044" /><path d="M14 7.500h8M14 10.500h8M14 13.500h8M14 16.500h8" stroke="#1d7044" strokeWidth="1.500" /><path d="m1 3 13-2v22L1 21z" fill="#1d7044" /><path d="m4 8 6 8M10 8l-6 8" stroke="#fff" strokeWidth="2" /></> },
  { name: "SketchUp", el: <><path d="m2 4 11-3 9 4-1 11-10 7-7-5z" fill="#d8232c" /><path d="m5 7 8-2 6 3v4M6 10l6-1 4 3v5M6 14l4-1 2 2v5" stroke="#fff" strokeWidth="1.500" /></> },
  { name: "File Explorer", run: true, el: <><path d="M1 3h8l2 2h12v16H1z" fill="#f6d673" /><path d="M1 9h22v12H1z" fill="#fbe697" /><path d="M5 22v-8h14v8h-4v-4H9v4z" fill="#3f9ddd" /></> },
  { name: "Chrome", run: true, el: <><circle cx="12" cy="12" r="11" fill="#e24133" /><path d="M12 12 2.500 6.500A11 11 0 0 0 11 23z" fill="#31a350" /><path d="M12 12h11a11 11 0 0 1-12 11l6-8z" fill="#fdd13a" /><path d="M12 7h10a11 11 0 0 1 1 5l-6 0z" fill="#fdd13a" /><circle cx="12" cy="12" r="5" fill="#fff" /><circle cx="12" cy="12" r="4" fill="#4a83ec" /></> },
  { name: "Reader", run: true, el: <><path d="M0 0h24v24H0z" fill="#f4f4f4" /><path d="M2 5 12 1l10 4v8l-10 10L2 13z" fill="#8e8e8e" /><path d="M12 1v22l10-10V5z" fill="#a8a8a8" /><path d="M0 6c7 4 17 4 24 0v3c-4 1-5 4-8 4l-4-2-4 2c-3 0-4-3-8-4z" fill="#d8232c" /></> },
  { name: "Spotify", run: true, el: <><circle cx="12" cy="12" r="11.500" fill="#1ed760" /><path d="M5 8.500c5-1.500 10-1 14 1.500M6 12.500c4-1 8-.500 12 1.500M7 16c3-1 6-.500 9 1" stroke="#0a1a10" strokeWidth="2" strokeLinecap="round" /></> },
  { name: "Photos", run: true, el: <><path d="M3 2h15v21H3z" fill="#f4f8fc" /><path d="M5 8h11v10H5z" fill="#1b7fd0" /><path d="m5 18 4-5 3 3 2-2 2 4z" fill="#fff" /><path d="m13 1 7 2 2 6-5-1z" fill="#4ba3e8" /></> },
  { name: "Steam", run: true, el: <><circle cx="12" cy="12" r="11" fill="#17355f" /><circle cx="16" cy="8" r="4" stroke="#e8eef6" strokeWidth="2" /><circle cx="8" cy="16" r="3" fill="#e8eef6" /><path d="m2 13 6 3 6-5" stroke="#e8eef6" strokeWidth="2.500" /></> },
];

function Taskbar() {
  return (
    <footer className="flex h-10 shrink-0 items-stretch justify-between bg-linear-to-r from-[#0b0b0c] via-[#030910] to-[#0c0d0e] text-[12px] text-white">
      <div className="flex">
        {APPS.map((a, i) => (
          <button key={a.name} aria-label={a.name} className={`flex h-10 flex-col items-center justify-end ${i === 0 ? "w-[43px] pr-[5px]" : "w-[49px]"} ${a.active ? "bg-[#3a3e42]" : ""}`}>
            <span className="flex flex-1 items-center pt-[2px]">
              <Ic s={24}>{a.el}</Ic>
            </span>
            <span className={`h-[2px] ${a.active ? "w-full" : "w-10"} ${a.run ? "bg-[#76b9ed]" : ""}`} />
          </button>
        ))}
      </div>
      <div className="flex flex-col items-center pt-[2px] pr-1 leading-[18px]">
        <span>2:14 PM</span>
        <span>1/23/2018</span>
      </div>
    </footer>
  );
}

export default function App() {
  return (
    <div className="relative flex min-h-screen flex-col bg-[#383838] font-['Open_Sans','Noto_Sans',sans-serif]">
      <TitleBar />
      <RibbonTabs />
      <Ribbon />
      <DocTabs />
      <div className="flex flex-1">
        <Properties />
        <Canvas />
      </div>
      <StatusBar />
      <Taskbar />
      {/* application menu hangs over the title bar and tab row */}
      <button aria-label="Application menu" className="absolute top-0 left-0 flex h-[38px] w-9 items-center gap-[3px] border border-t-0 border-l-0 border-[#222] bg-linear-to-b from-[#a8a8a8] to-[#5e5e5e]">
        <svg width="24" height="30" viewBox="0 0 24 30" className="-mt-4" aria-hidden="true">
          <path d="M0 29 8 1h6l10 27-6 1-3-8-8 1-2 7zM9 16h5L11 7z" fill="#c9252b" fillRule="evenodd" />
          <path d="m14 1 10 27-6 1-7-22z" fill="#de4440" />
        </svg>
        <svg width="7" height="5" aria-hidden="true"><path d="M0 0h7L3.500 5z" fill="#222" /></svg>
      </button>
    </div>
  );
}
